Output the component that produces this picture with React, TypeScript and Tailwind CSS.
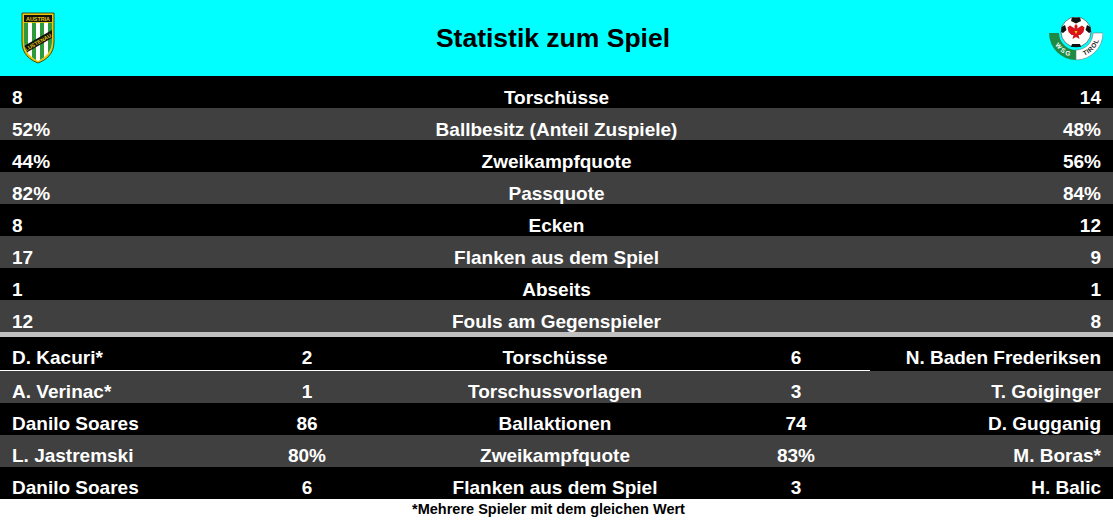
import React from 'react';

const topRows: [string, string, string][] = [
  ['8', 'Torschüsse', '14'],
  ['52%', 'Ballbesitz (Anteil Zuspiele)', '48%'],
  ['44%', 'Zweikampfquote', '56%'],
  ['82%', 'Passquote', '84%'],
  ['8', 'Ecken', '12'],
  ['17', 'Flanken aus dem Spiel', '9'],
  ['1', 'Abseits', '1'],
  ['12', 'Fouls am Gegenspieler', '8'],
];

const playerRows: [string, string, string, string, string][] = [
  ['D. Kacuri*', '2', 'Torschüsse', '6', 'N. Baden Frederiksen'],
  ['A. Verinac*', '1', 'Torschussvorlagen', '3', 'T. Goiginger'],
  ['Danilo Soares', '86', 'Ballaktionen', '74', 'D. Gugganig'],
  ['L. Jastremski', '80%', 'Zweikampfquote', '83%', 'M. Boras*'],
  ['Danilo Soares', '6', 'Flanken aus dem Spiel', '3', 'H. Balic'],
];

const LustenauCrest = () => (
  <svg width="34" height="52" viewBox="0 0 34 52">
    <defs>
      <clipPath id="crest-inner">
        <path d="M3,3 H31 V30 C31,40 23,46 17,49 C11,46 3,40 3,30 Z" />
      </clipPath>
    </defs>
    <path d="M1,1 H33 V30 C33,42 25,48 17,51 C9,48 1,42 1,30 Z" fill="#e8c80a" stroke="#2a2a00" strokeWidth="0.8" />
    <g clipPath="url(#crest-inner)">
      <rect x="3" y="3" width="28" height="48" fill="#ffffff" />
      <rect x="3" y="3" width="4" height="48" fill="#2e9a3c" />
      <rect x="11" y="3" width="4" height="48" fill="#2e9a3c" />
      <rect x="19" y="3" width="4" height="48" fill="#2e9a3c" />
      <rect x="27" y="3" width="4" height="48" fill="#2e9a3c" />
      <rect x="3" y="3" width="28" height="7" fill="#111111" />
      <rect x="3" y="10" width="28" height="0.8" fill="#e8c80a" />
      <text x="17" y="8.6" fontSize="5.4" fill="#e8c80a" textAnchor="middle" fontFamily="Liberation Sans, sans-serif" fontWeight="bold">
        AUSTRIA
      </text>
      <g transform="rotate(-30 17 30)">
        <rect x="-4" y="26.5" width="42" height="7" fill="#111111" />
        <text x="17" y="32.2" fontSize="5.4" fill="#e8c80a" textAnchor="middle" fontFamily="Liberation Sans, sans-serif" fontWeight="bold">
          LUSTENAU
        </text>
      </g>
    </g>
  </svg>
);

const TirolCrest = () => (
  <svg width="54" height="44" viewBox="0 0 54 44">
    <defs>
      <path id="tirol-arc" d="M3,16 A24,24 0 0 0 51,16" />
    </defs>
    {/* ball */}
    <circle cx="27" cy="15" r="15" fill="#ffffff" stroke="#333" strokeWidth="0.6" />
    <path d="M23,0.6 L31,0.6 L32,4 L27,6.5 L22,4 Z" fill="#111" />
    <path d="M12.5,10 L16,8 L17.5,13 L14,16 L12,15 Z" fill="#111" />
    <path d="M41.5,10 L38,8 L36.5,13 L40,16 L42,15 Z" fill="#111" />
    <path d="M23,27 L31,27 L32,30 L22,30 Z" fill="#111" />
    {/* eagle */}
    <path
      d="M27,7 L28.6,9 L28.2,11.5 L33,8.5 L35.5,10.5 L34.5,15 L31.5,18 L29.5,18 L30.5,22 L27,20 L23.5,22 L24.5,18 L22.5,18 L19.5,15 L18.5,10.5 L21,8.5 L25.8,11.5 L25.4,9 Z"
      fill="#d8121a"
    />
    <path d="M25.5,14 L28.5,14 L27,17 Z" fill="#f5d000" />
    {/* band */}
    <path d="M0,16 A27,27 0 0 0 27,43 L27,33 A17,17 0 0 1 10,16 Z" fill="#1e8a44" />
    <path d="M27,43 A27,27 0 0 0 54,16 L44,16 A17,17 0 0 1 27,33 Z" fill="#ffffff" stroke="#777" strokeWidth="0.6" />
    <text fontSize="6.5" fontFamily="Liberation Sans, sans-serif" fontWeight="bold" fill="#ffffff" textAnchor="middle" letterSpacing="1.5">
      <textPath href="#tirol-arc" startOffset="30%">
        WSG
      </textPath>
    </text>
    <text fontSize="6.5" fontFamily="Liberation Sans, sans-serif" fontWeight="bold" fill="#222222" textAnchor="middle" letterSpacing="0.6">
      <textPath href="#tirol-arc" startOffset="76%">
        TIROL
      </textPath>
    </text>
  </svg>
);

export default function App() {
  return (
    <div className="w-[1113px] h-[520px] bg-white font-['Liberation_Sans',Arial,sans-serif] font-bold text-white">
      {/* header */}
      <div className="h-[76px] bg-[#00ffff] flex items-center justify-between pl-[21px] pr-[10px]">
        <LustenauCrest />
        <h1 className="text-[26.5px] leading-none text-black pl-[2px]">Statistik zum Spiel</h1>
        <div className="pt-[2px]">
          <TirolCrest />
        </div>
      </div>

      {/* team stats */}
      {topRows.map(([l, label, r], i) => (
        <div
          key={label}
          className={`h-8 flex items-end pl-3 pr-3 pb-px text-[19px] leading-[19px] ${i % 2 === 0 ? 'bg-black' : 'bg-[#404040]'}`}
        >
          <span className="w-[200px]">{l}</span>
          <span className="flex-1 text-center">{label}</span>
          <span className="w-[200px] text-right">{r}</span>
        </div>
      ))}

      <div className="h-[5px] bg-[#c0c0c0]" />

      {/* player stats */}
      {playerRows.map(([ln, lv, label, rv, rn], i) => (
        <React.Fragment key={label + i}>
          <div
            className={`flex items-end pl-3 pr-3 text-[19px] leading-[19px] ${i === 0 ? 'h-[33px] pb-[3px]' : 'h-8 pb-[2px]'} ${i % 2 === 0 ? 'bg-black' : 'bg-[#404040]'}`}
          >
            <span className="w-[220px]">{ln}</span>
            <span className="w-[150px] text-center">{lv}</span>
            <span className="w-[346px] text-center">{label}</span>
            <span className="w-[136px] text-center">{rv}</span>
            <span className="flex-1 text-right">{rn}</span>
          </div>
          {i === 0 && (
            <div className="h-px flex">
              <div className="w-[870px] bg-white" />
              <div className="flex-1 bg-black" />
            </div>
          )}
        </React.Fragment>
      ))}

      <div className="h-[21px] flex items-center justify-center pr-4 text-[14.5px] leading-none text-black">
        *Mehrere Spieler mit dem gleichen Wert
      </div>
    </div>
  );
}
